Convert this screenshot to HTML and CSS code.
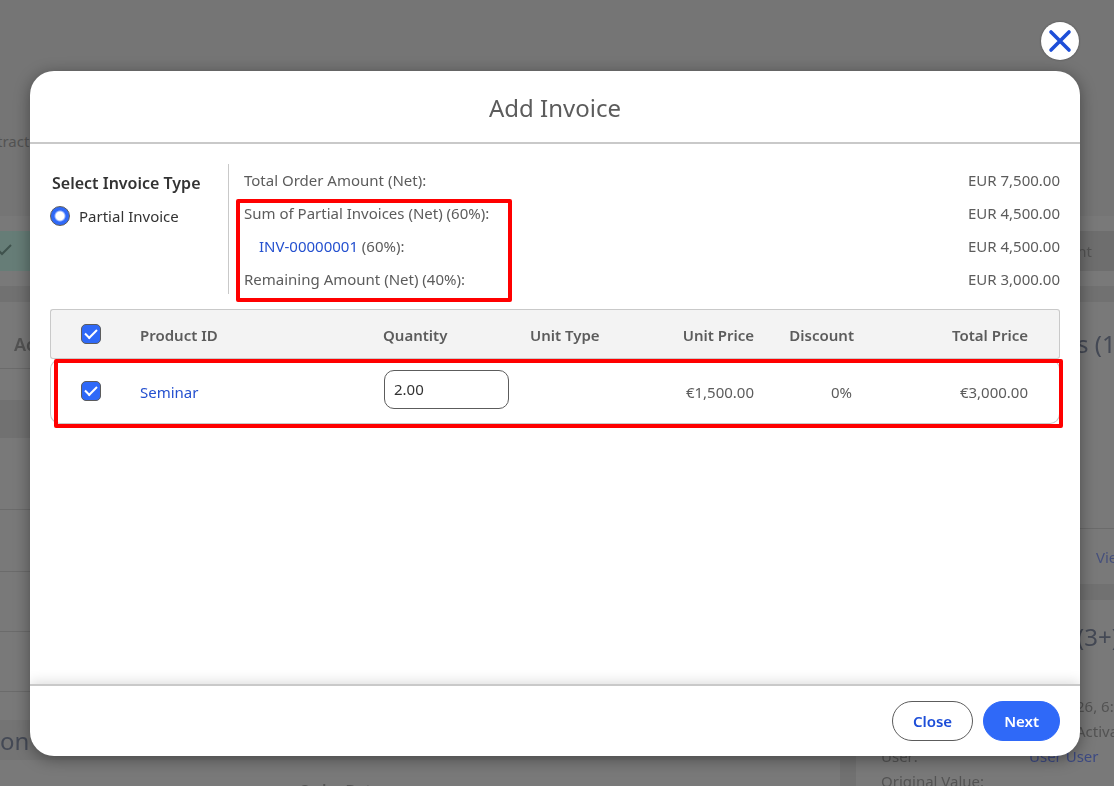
FILE: index.html
```html
<!DOCTYPE html>
<html lang="en">
<head>
<meta charset="utf-8">
<title>Add Invoice</title>
<meta name="viewport" content="width=device-width, initial-scale=1">
<link rel="stylesheet" href="styles.css">
</head>
<body>
<div class="page" aria-hidden="true">
  <div class="page-top"><span>tract</span></div>
  <div class="status">
    <div class="status-done"><svg width="14" height="14" viewBox="0 0 14 14"><path d="M-2 7l4 4L11 2" fill="none" stroke="#3f524d" stroke-width="2"/></svg></div>
    <div class="status-next">nt</div>
  </div>
  <div class="columns">
    <div class="col-left">
      <div class="tile-head">Ac</div>
      <div class="tile-foot"></div>
      <div class="lines">
        <div class="line line-first"></div>
        <div class="line line-second"></div>
        <div class="line"></div>
        <div class="line"></div>
        <div class="line-rest"></div>
      </div>
      <div class="section-title">on</div>
      <div class="order-date">Order Date</div>
    </div>
    <div class="col-right">
      <div class="tile tile-a">
        <div class="tile-title">s (1</div>
        <div class="tile-view">View</div>
      </div>
      <div class="tile tile-b">
        <div class="tile-title">(3+)</div>
        <dl class="facts">
          <dt></dt><dd class="fact-cut">26, 6:</dd>
          <dt></dt><dd class="fact-cut">Activa</dd>
          <dt>User:</dt><dd class="fact-user">User User</dd>
          <dt>Original Value:</dt><dd></dd>
        </dl>
      </div>
    </div>
  </div>
</div>
<div class="overlay">
  <div class="overlay-bar">
    <button class="dismiss" type="button" aria-label="Dismiss"><svg width="24" height="24" viewBox="0 0 24 24"><path d="M3 3l18 18M21 3L3 21" fill="none" stroke="#1d4ed8" stroke-width="3.6" stroke-linecap="round"/></svg></button>
  </div>
  <div class="dialog" role="dialog" aria-labelledby="dialog-title">
    <header class="dialog-head"><h1 id="dialog-title">Add Invoice</h1></header>
    <div class="dialog-body">
      <section class="summary">
        <fieldset class="types">
          <legend>Select Invoice Type</legend>
          <label class="choice"><input type="radio" name="type" checked><span>Partial Invoice</span></label>
        </fieldset>
        <div class="amounts">
          <div class="amount"><span>Total Order Amount (Net):</span><span>EUR 7,500.00</span></div>
          <div class="amount"><span>Sum of Partial Invoices (Net) (60%):</span><span>EUR 4,500.00</span></div>
          <div class="amount"><span class="nested"><a href="#">INV-00000001</a> (60%):</span><span>EUR 4,500.00</span></div>
          <div class="amount"><span>Remaining Amount (Net) (40%):</span><span>EUR 3,000.00</span></div>
          <div class="mark mark-amounts"></div>
        </div>
      </section>
      <div class="items">
        <table>
          <colgroup><col class="c-check"><col><col class="c-qty"><col class="c-unit"><col class="c-price"><col class="c-discount"><col class="c-total"></colgroup>
          <thead>
            <tr>
              <th class="check"><input type="checkbox" aria-label="Select all products" checked></th>
              <th>Product ID</th><th>Quantity</th><th>Unit Type</th>
              <th class="num">Unit Price</th><th class="num">Discount</th><th class="num">Total Price</th>
            </tr>
          </thead>
          <tbody>
            <tr>
              <td class="check"><input type="checkbox" aria-label="Select Seminar" checked></td>
              <td><a href="#">Seminar</a></td>
              <td><input class="qty" type="text" aria-label="Quantity" value="2.00"></td>
              <td></td>
              <td class="num">€1,500.00</td><td class="num">0%</td><td class="num">€3,000.00</td>
            </tr>
          </tbody>
        </table>
        <div class="mark mark-row"></div>
      </div>
    </div>
    <footer class="dialog-foot">
      <button class="btn" type="button">Close</button>
      <button class="btn btn-primary" type="button">Next</button>
    </footer>
  </div>
</div>
</body>
</html>
```
FILE: styles.css
```css
* { box-sizing: border-box; }

body {
  margin: 0;
  font: 15px/20px "Noto Sans", "Open Sans", sans-serif;
  color: #5c5c5c;
  background: #717171;
}

input, button { font: inherit; margin: 0; }
a { color: #2450cf; text-decoration: none; }

/* Dimmed page behind the dialog */
.page {
  position: fixed;
  inset: 0;
  overflow: hidden;
  display: flex;
  flex-direction: column;
  color: #535353;
}
.page-top { height: 216px; flex: none; padding-top: 131px; background: #757575; }
.page-top span { margin-left: -3px; }
.status {
  flex: none;
  display: flex;
  height: 70px;
  padding: 15px 0;
  background: #797979;
  line-height: 40px;
}
.status-done { flex: 1; background: #667d77; }
.status-next { flex: 1; background: #6e6e6e; text-align: right; padding-right: 22px; }
.columns { flex: 1; display: flex; gap: 16px; padding-top: 16px; }
.col-left { flex: 1; }
.tile-head {
  height: 67px;
  padding: 32px 0 0 14px;
  background: #797979;
  border-bottom: 1px solid #6b6b6b;
  font-size: 18px;
  font-weight: 600;
}
.tile-foot { height: 31px; background: #797979; }
.lines { margin-top: 38px; background: #797979; }
.line { height: 60px; border-bottom: 1px solid #6b6b6b; }
.line-first { height: 72px; }
.line-second { height: 62px; }
.line-rest { height: 28px; }
.section-title { padding: 11px 0 9px; font-size: 24px; color: #444955; background: #747474; }
.order-date { padding: 19px 0 0 299px; font-weight: 600; background: #797979; height: 60px; }
.col-right { flex: none; width: 258px; display: flex; flex-direction: column; gap: 16px; }
.tile { background: #797979; }
.tile-title { font-size: 24px; line-height: 32px; color: #444955; padding-left: 221px; white-space: nowrap; }
.tile-a { height: 282px; padding-top: 26px; }
.tile-view { margin-top: 168px; padding: 18px 0 0 240px; border-top: 1px solid #6b6b6b; color: #46507c; }
.tile-b { flex: 1; padding-top: 21px; }
.facts { margin: 43px 0 0; display: grid; grid-template-columns: 148px 1fr; grid-auto-rows: 25px; padding-left: 25px; white-space: nowrap; }
.facts dd { margin: 0; }
.facts .fact-cut { padding-left: 47px; }
.facts .fact-user { color: #3d4a83; }

/* Dialog */
.overlay {
  position: relative;
  display: flex;
  flex-direction: column;
  min-height: 100vh;
  padding: 22px 34px 30px 30px;
}
.overlay-bar { display: flex; justify-content: flex-end; height: 49px; }
.dismiss {
  display: grid;
  place-items: center;
  width: 38px;
  height: 38px;
  margin-right: 1px;
  padding: 0;
  border: 0;
  border-radius: 50%;
  background: #fff;
  box-shadow: 0 0 2px #444;
}
.dialog {
  flex: 1;
  display: flex;
  flex-direction: column;
  overflow: hidden;
  border-radius: 24px;
  background: #fff;
  box-shadow: 0 3px 16px rgba(0, 0, 0, .4);
}
.dialog-head { padding: 21px 0 18px; border-bottom: 2px solid #c9c9c9; text-align: center; }
.dialog-head h1 { margin: 0; font-size: 24px; line-height: 32px; font-weight: 400; }
.dialog-body { flex: 1; padding: 20px; }

.summary { display: flex; height: 130px; }
.types { flex: none; width: 178px; margin: 0; padding: 0; border: 0; color: #333; }
.types legend { padding: 8px 0 0 2px; font-size: 16px; line-height: 22px; font-weight: 600; }
.choice { display: flex; align-items: center; gap: 9px; margin-top: 12px; }
.choice input {
  appearance: none;
  width: 20px;
  height: 20px;
  border: 1px solid #5c5c5c;
  border-radius: 50%;
  background: radial-gradient(circle, #fff 4px, #2f69f8 6px);
}
.amounts { position: relative; flex: 1; padding-left: 15px; border-left: 1px solid #c9c9c9; }
.amount { display: flex; justify-content: space-between; line-height: 33px; }
.nested { padding-left: 15px; }

.mark { position: absolute; border: 4px solid #f00; border-radius: 2px; pointer-events: none; }
.mark-amounts { top: 35px; left: 7px; width: 276px; height: 103px; }
.mark-row { top: 50px; left: 4px; right: -3px; height: 69px; }

.items { position: relative; margin-top: 15px; }
table { width: 100%; table-layout: fixed; border-collapse: separate; border-spacing: 0; }
.c-check { width: 90px; }
.c-qty { width: 147px; }
.c-unit, .c-price { width: 112px; }
.c-discount { width: 100px; }
.c-total { width: 206px; }
th, td { padding: 0; text-align: left; border: solid #c9c9c9; border-width: 1px 0; }
th { height: 50px; font-weight: 600; background: #f3f3f3; padding-top: 1px; }
td { height: 65px; }
th:first-child, td:first-child { border-left-width: 1px; border-radius: 10px 0 0 10px; }
th:last-child, td:last-child { border-right-width: 1px; border-radius: 0 10px 10px 0; padding-right: 31px; }
th:first-child { border-radius: 3px 0 0 3px; }
th:last-child { border-radius: 0 3px 3px 0; }
.num { text-align: right; }
td:nth-child(6) { padding-right: 2px; }
.check { padding: 0 0 0 30px; }
td.check { padding-bottom: 2px; }
.check input {
  appearance: none;
  display: grid;
  place-items: center;
  width: 20px;
  height: 20px;
  border: 1px solid #5c5c5c;
  border-radius: 5px;
  background: #2f69f8;
}
.check input::after {
  content: "";
  width: 10px;
  height: 5px;
  margin-bottom: 3px;
  border: solid #fff;
  border-width: 0 0 2px 2px;
  transform: rotate(-45deg);
}
.qty {
  display: block;
  width: 125px;
  height: 39px;
  margin: 0 0 5px 1px;
  padding: 0 9px;
  border: 1px solid #5c5c5c;
  border-radius: 10px;
  background: #fff;
  color: #333;
}

.dialog-foot {
  display: flex;
  justify-content: flex-end;
  gap: 10px;
  padding: 15px 20px;
  border-top: 2px solid #c9c9c9;
  box-shadow: 0 -2px 12px rgba(0, 0, 0, .14);
}
.btn {
  height: 40px;
  padding: 0 20px;
  border: 1px solid #5c5c5c;
  border-radius: 20px;
  background: #fff;
  color: #1d4ed8;
  font-weight: 600;
}
.btn-primary { border-color: #2f69f8; background: #2f69f8; color: #fff; }
```
